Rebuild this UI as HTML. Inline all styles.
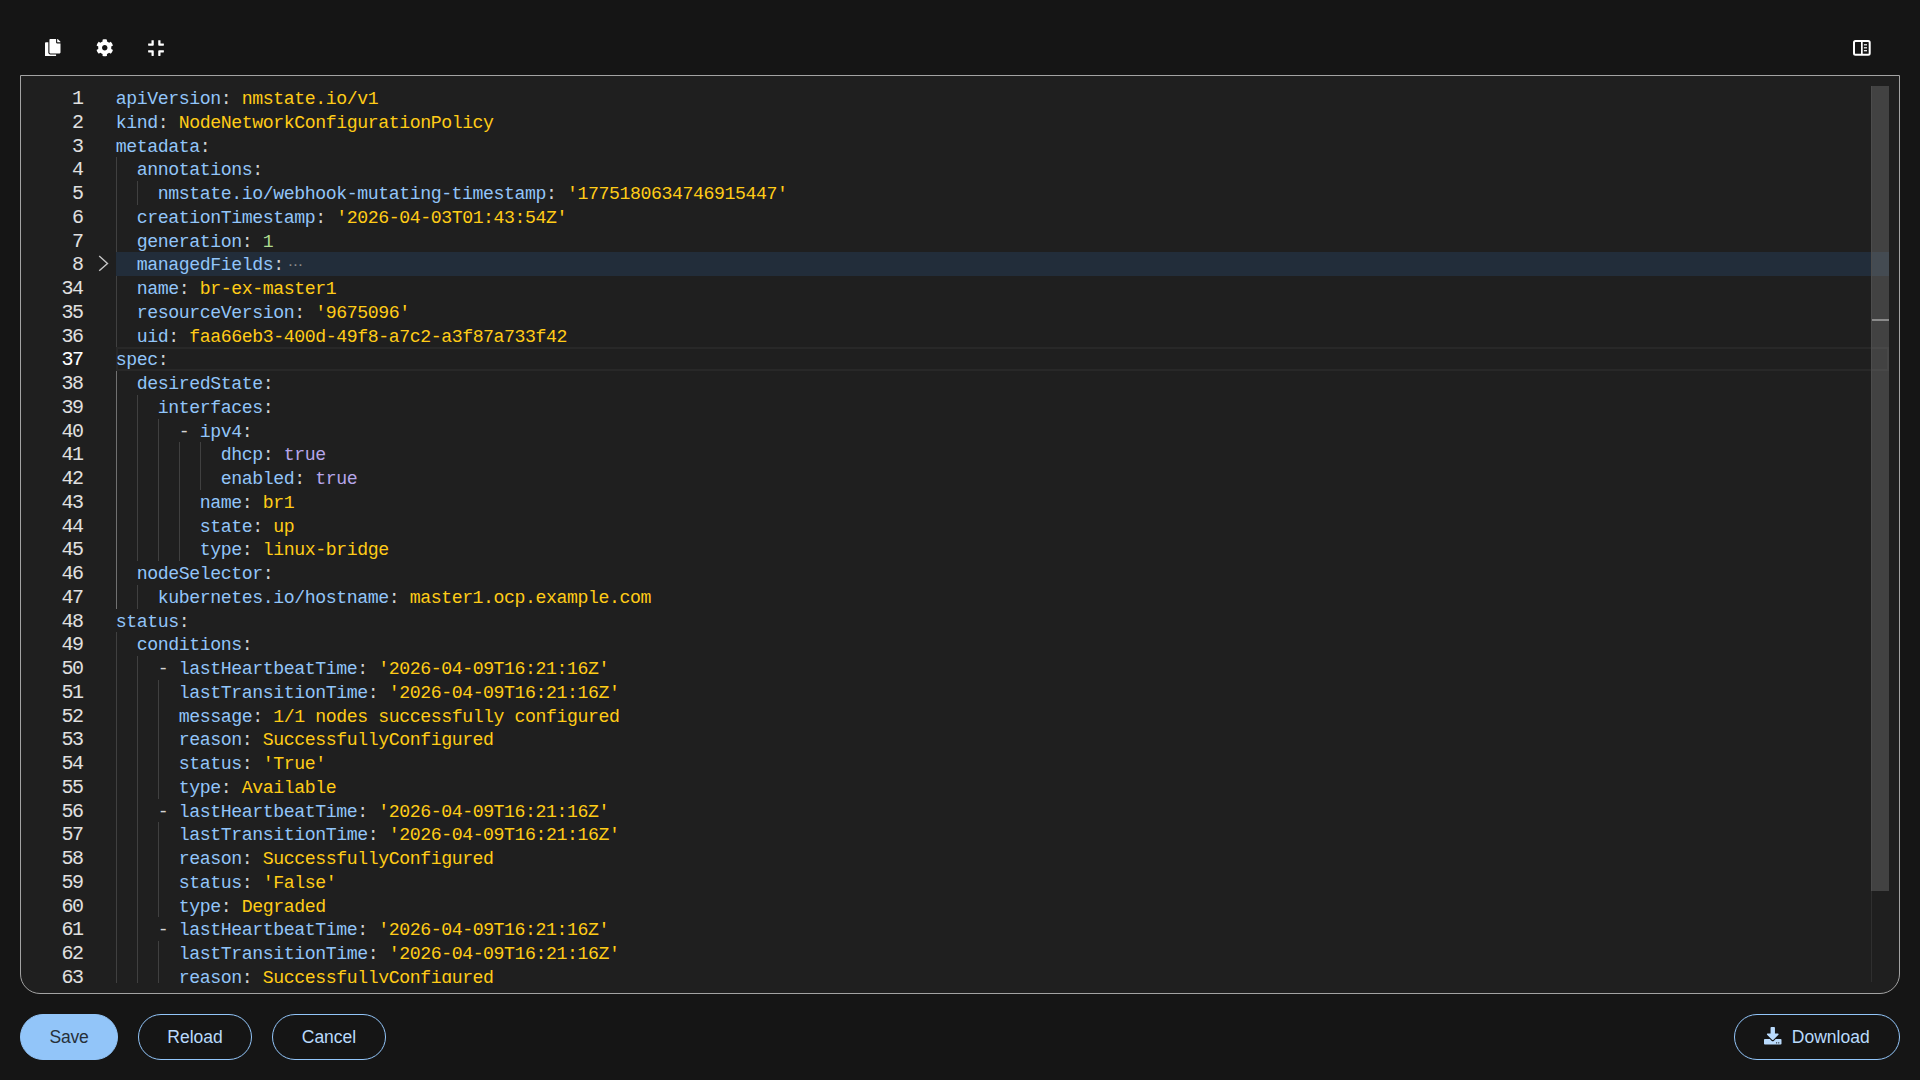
<!DOCTYPE html>
<html lang="en"><head><meta charset="utf-8"><title>YAML editor</title>
<style>
html,body{margin:0;padding:0;}
body{width:1920px;height:1080px;overflow:hidden;background:#151515;position:relative;font-family:"Liberation Sans",sans-serif;}
.ico{position:absolute;fill:#fff;}
#ed{position:absolute;left:20px;top:75px;width:1878px;height:917px;border:1px solid #a3a3a3;border-radius:0 0 20px 20px;background:#1f1f1f;}
#mo{position:absolute;left:9px;top:10px;width:1860px;height:897px;overflow:hidden;font-family:"Liberation Mono","DejaVu Sans Mono",monospace;font-size:18.2px;letter-spacing:-0.42px;line-height:23.75px;}
.ln{position:absolute;left:0;width:52.4px;margin-top:1px;font-size:20px;letter-spacing:-1.5px;text-align:right;height:23.75px;color:#e0e0e0;white-space:pre;}
.ln.act{color:#fff;}
.row{position:absolute;left:85.8px;margin-top:2px;height:23.75px;white-space:pre;color:#d4d4d4;}
.k{color:#92c5f9;} .s{color:#ffcc17;} .n{color:#afdc8f;} .b{color:#b6a6e9;} .d{color:#d4d4d4;}
.fold{color:#8c8c8c;font-family:"DejaVu Sans",sans-serif;font-size:15px;letter-spacing:0;margin-left:3.9px;line-height:10px;position:relative;top:-0.4px;}
.g{position:absolute;width:1px;background:#404040;}
.g.ga{background:#707070;}
#foldbg{position:absolute;left:86px;top:166.25px;width:1773px;height:23.75px;background:#222d3a;}
#curline{position:absolute;left:86px;top:261.25px;width:1769px;height:19.75px;border:2px solid #282828;}
#sb{position:absolute;left:1841px;top:0;width:18px;height:805px;background:rgba(121,121,121,0.4);}
#sbl{position:absolute;left:1841px;top:0;width:1px;height:896px;background:#2f2f2f;}
#ovr{position:absolute;left:1842px;top:233px;width:17px;height:2px;background:#8a8a8a;}
.btn{position:absolute;top:1014px;height:44px;border:1px solid #92c5f9;border-radius:23px;color:#b9dafc;font-size:17.5px;line-height:44px;text-align:center;white-space:nowrap;}
.btn.pri{background:#92c5f9;color:#27303a;letter-spacing:-0.25px;}
</style></head><body>
<svg class="ico" style="left:45px;top:38.5px" width="15.5" height="17.75" viewBox="0 0 448 512"><path d="M320 448v40c0 13.255-10.745 24-24 24H24c-13.255 0-24-10.745-24-24V120c0-13.255 10.745-24 24-24h72v296c0 30.879 25.121 56 56 56h168zm0-344V0H152c-13.255 0-24 10.745-24 24v368c0 13.255 10.745 24 24 24h272c13.255 0 24-10.745 24-24V128H344c-13.200 0-24-10.800-24-24zm120.971-31.029L375.029 7.029A24 24 0 0 0 358.059 0H352v96h96v-6.059a24 24 0 0 0-7.029-16.970z"/></svg>
<svg class="ico" style="left:96px;top:39px" width="17.5" height="17.5" viewBox="0 0 512 512"><path d="M487.4 315.7l-42.600-24.600c4.300-23.200 4.300-47 0-70.200l42.600-24.600c4.900-2.800 7.100-8.600 5.500-14-11.100-35.600-30-67.800-54.700-94.600-3.800-4.100-10-5.100-14.800-2.300L380.800 110c-17.900-15.400-38.500-27.300-60.800-35.100V25.800c0-5.600-3.900-10.500-9.400-11.700-36.700-8.200-74.300-7.800-109.200 0-5.500 1.200-9.400 6.100-9.400 11.700V75c-22.200 7.900-42.800 19.800-60.800 35.100L88.700 85.500c-4.900-2.800-11-1.900-14.800 2.300-24.700 26.700-43.600 58.900-54.700 94.600-1.700 5.400.6 11.200 5.500 14L67.300 221c-4.300 23.200-4.300 47 0 70.200l-42.600 24.600c-4.900 2.800-7.100 8.600-5.500 14 11.100 35.600 30 67.800 54.700 94.600 3.800 4.100 10 5.100 14.800 2.300l42.600-24.600c17.900 15.400 38.500 27.300 60.800 35.100v49.200c0 5.600 3.900 10.500 9.400 11.700 36.700 8.200 74.300 7.800 109.200 0 5.500-1.200 9.400-6.100 9.400-11.700v-49.200c22.200-7.900 42.800-19.800 60.800-35.100l42.600 24.600c4.900 2.800 11 1.900 14.800-2.300 24.700-26.700 43.600-58.900 54.700-94.600 1.500-5.500-.7-11.300-5.600-14.100zM256 336c-44.100 0-80-35.900-80-80s35.900-80 80-80 80 35.900 80 80-35.900 80-80 80z"/></svg>
<svg class="ico" style="left:148px;top:39px" width="16" height="18" viewBox="0 0 448 512"><path d="M436 192H312c-13.300 0-24-10.700-24-24V44c0-6.600 5.400-12 12-12h40c6.600 0 12 5.400 12 12v84h84c6.600 0 12 5.400 12 12v40c0 6.600-5.400 12-12 12zm-276-24V44c0-6.600-5.400-12-12-12h-40c-6.600 0-12 5.400-12 12v84H12c-6.600 0-12 5.400-12 12v40c0 6.600 5.400 12 12 12h124c13.300 0 24-10.700 24-24zm0 300V344c0-13.300-10.700-24-24-24H12c-6.600 0-12 5.400-12 12v40c0 6.600 5.400 12 12 12h84v84c0 6.600 5.400 12 12 12h40c6.600 0 12-5.400 12-12zm192 0v-84h84c6.600 0 12-5.400 12-12v-40c0-6.600-5.400-12-12-12H312c-13.300 0-24 10.700-24 24v124c0 6.600 5.400 12 12 12h40c6.600 0 12-5.400 12-12z"/></svg>
<svg class="ico" style="left:1852px;top:39px;fill:none" width="20" height="18" viewBox="0 0 20 18"><rect x="2" y="2" width="15.7" height="13.85" rx="1.5" stroke="#fff" stroke-width="2"/><rect x="9" y="2" width="1.7" height="14" fill="#fff"/><rect x="11.9" y="5.2" width="3.1" height="1.2" fill="#fff"/><rect x="11.9" y="8.2" width="3.1" height="1.2" fill="#fff"/><rect x="11.9" y="11.1" width="3.1" height="1.2" fill="#fff"/></svg>
<div id="ed"><div id="mo">
<i class="g" style="left:86.0px;top:71.25px;height:190.00px"></i>
<i class="g" style="left:107.0px;top:95.00px;height:23.75px"></i>
<i class="g ga" style="left:86.0px;top:285.00px;height:237.50px"></i>
<i class="g" style="left:107.0px;top:308.75px;height:166.25px"></i>
<i class="g" style="left:107.0px;top:498.75px;height:23.75px"></i>
<i class="g" style="left:128.0px;top:332.50px;height:142.50px"></i>
<i class="g" style="left:149.0px;top:356.25px;height:118.75px"></i>
<i class="g" style="left:170.0px;top:356.25px;height:47.50px"></i>
<i class="g" style="left:86.0px;top:546.25px;height:356.25px"></i>
<i class="g" style="left:107.0px;top:570.00px;height:332.50px"></i>
<i class="g" style="left:128.0px;top:593.75px;height:118.75px"></i>
<i class="g" style="left:128.0px;top:736.25px;height:95.00px"></i>
<i class="g" style="left:128.0px;top:855.00px;height:47.50px"></i>
<div id="foldbg"></div><div id="curline"></div>
<div class="ln" style="top:0.00px">1</div>
<div class="row" style="top:0.00px"><span class="k">apiVersion</span><span class="d">:</span> <span class="s">nmstate.io/v1</span></div>
<div class="ln" style="top:23.75px">2</div>
<div class="row" style="top:23.75px"><span class="k">kind</span><span class="d">:</span> <span class="s">NodeNetworkConfigurationPolicy</span></div>
<div class="ln" style="top:47.50px">3</div>
<div class="row" style="top:47.50px"><span class="k">metadata</span><span class="d">:</span></div>
<div class="ln" style="top:71.25px">4</div>
<div class="row" style="top:71.25px">  <span class="k">annotations</span><span class="d">:</span></div>
<div class="ln" style="top:95.00px">5</div>
<div class="row" style="top:95.00px">    <span class="k">nmstate.io/webhook-mutating-timestamp</span><span class="d">:</span> <span class="s">&#x27;1775180634746915447&#x27;</span></div>
<div class="ln" style="top:118.75px">6</div>
<div class="row" style="top:118.75px">  <span class="k">creationTimestamp</span><span class="d">:</span> <span class="s">&#x27;2026-04-03T01:43:54Z&#x27;</span></div>
<div class="ln" style="top:142.50px">7</div>
<div class="row" style="top:142.50px">  <span class="k">generation</span><span class="d">:</span> <span class="n">1</span></div>
<div class="ln" style="top:166.25px">8</div>
<div class="row" style="top:166.25px">  <span class="k">managedFields</span><span class="d">:</span><span class="fold">⋯</span></div>
<div class="ln" style="top:190.00px">34</div>
<div class="row" style="top:190.00px">  <span class="k">name</span><span class="d">:</span> <span class="s">br-ex-master1</span></div>
<div class="ln" style="top:213.75px">35</div>
<div class="row" style="top:213.75px">  <span class="k">resourceVersion</span><span class="d">:</span> <span class="s">&#x27;9675096&#x27;</span></div>
<div class="ln" style="top:237.50px">36</div>
<div class="row" style="top:237.50px">  <span class="k">uid</span><span class="d">:</span> <span class="s">faa66eb3-400d-49f8-a7c2-a3f87a733f42</span></div>
<div class="ln act" style="top:261.25px">37</div>
<div class="row" style="top:261.25px"><span class="k">spec</span><span class="d">:</span></div>
<div class="ln" style="top:285.00px">38</div>
<div class="row" style="top:285.00px">  <span class="k">desiredState</span><span class="d">:</span></div>
<div class="ln" style="top:308.75px">39</div>
<div class="row" style="top:308.75px">    <span class="k">interfaces</span><span class="d">:</span></div>
<div class="ln" style="top:332.50px">40</div>
<div class="row" style="top:332.50px">      <span class="d">- </span><span class="k">ipv4</span><span class="d">:</span></div>
<div class="ln" style="top:356.25px">41</div>
<div class="row" style="top:356.25px">          <span class="k">dhcp</span><span class="d">:</span> <span class="b">true</span></div>
<div class="ln" style="top:380.00px">42</div>
<div class="row" style="top:380.00px">          <span class="k">enabled</span><span class="d">:</span> <span class="b">true</span></div>
<div class="ln" style="top:403.75px">43</div>
<div class="row" style="top:403.75px">        <span class="k">name</span><span class="d">:</span> <span class="s">br1</span></div>
<div class="ln" style="top:427.50px">44</div>
<div class="row" style="top:427.50px">        <span class="k">state</span><span class="d">:</span> <span class="s">up</span></div>
<div class="ln" style="top:451.25px">45</div>
<div class="row" style="top:451.25px">        <span class="k">type</span><span class="d">:</span> <span class="s">linux-bridge</span></div>
<div class="ln" style="top:475.00px">46</div>
<div class="row" style="top:475.00px">  <span class="k">nodeSelector</span><span class="d">:</span></div>
<div class="ln" style="top:498.75px">47</div>
<div class="row" style="top:498.75px">    <span class="k">kubernetes.io/hostname</span><span class="d">:</span> <span class="s">master1.ocp.example.com</span></div>
<div class="ln" style="top:522.50px">48</div>
<div class="row" style="top:522.50px"><span class="k">status</span><span class="d">:</span></div>
<div class="ln" style="top:546.25px">49</div>
<div class="row" style="top:546.25px">  <span class="k">conditions</span><span class="d">:</span></div>
<div class="ln" style="top:570.00px">50</div>
<div class="row" style="top:570.00px">    <span class="d">- </span><span class="k">lastHeartbeatTime</span><span class="d">:</span> <span class="s">&#x27;2026-04-09T16:21:16Z&#x27;</span></div>
<div class="ln" style="top:593.75px">51</div>
<div class="row" style="top:593.75px">      <span class="k">lastTransitionTime</span><span class="d">:</span> <span class="s">&#x27;2026-04-09T16:21:16Z&#x27;</span></div>
<div class="ln" style="top:617.50px">52</div>
<div class="row" style="top:617.50px">      <span class="k">message</span><span class="d">:</span> <span class="s">1/1 nodes successfully configured</span></div>
<div class="ln" style="top:641.25px">53</div>
<div class="row" style="top:641.25px">      <span class="k">reason</span><span class="d">:</span> <span class="s">SuccessfullyConfigured</span></div>
<div class="ln" style="top:665.00px">54</div>
<div class="row" style="top:665.00px">      <span class="k">status</span><span class="d">:</span> <span class="s">&#x27;True&#x27;</span></div>
<div class="ln" style="top:688.75px">55</div>
<div class="row" style="top:688.75px">      <span class="k">type</span><span class="d">:</span> <span class="s">Available</span></div>
<div class="ln" style="top:712.50px">56</div>
<div class="row" style="top:712.50px">    <span class="d">- </span><span class="k">lastHeartbeatTime</span><span class="d">:</span> <span class="s">&#x27;2026-04-09T16:21:16Z&#x27;</span></div>
<div class="ln" style="top:736.25px">57</div>
<div class="row" style="top:736.25px">      <span class="k">lastTransitionTime</span><span class="d">:</span> <span class="s">&#x27;2026-04-09T16:21:16Z&#x27;</span></div>
<div class="ln" style="top:760.00px">58</div>
<div class="row" style="top:760.00px">      <span class="k">reason</span><span class="d">:</span> <span class="s">SuccessfullyConfigured</span></div>
<div class="ln" style="top:783.75px">59</div>
<div class="row" style="top:783.75px">      <span class="k">status</span><span class="d">:</span> <span class="s">&#x27;False&#x27;</span></div>
<div class="ln" style="top:807.50px">60</div>
<div class="row" style="top:807.50px">      <span class="k">type</span><span class="d">:</span> <span class="s">Degraded</span></div>
<div class="ln" style="top:831.25px">61</div>
<div class="row" style="top:831.25px">    <span class="d">- </span><span class="k">lastHeartbeatTime</span><span class="d">:</span> <span class="s">&#x27;2026-04-09T16:21:16Z&#x27;</span></div>
<div class="ln" style="top:855.00px">62</div>
<div class="row" style="top:855.00px">      <span class="k">lastTransitionTime</span><span class="d">:</span> <span class="s">&#x27;2026-04-09T16:21:16Z&#x27;</span></div>
<div class="ln" style="top:878.75px">63</div>
<div class="row" style="top:878.75px">      <span class="k">reason</span><span class="d">:</span> <span class="s">SuccessfullyConfigured</span></div>
<svg style="position:absolute;left:66px;top:168px" width="14" height="20" viewBox="0 0 14 20"><path d="M3.2 2 L11.5 9.4 L3.2 16.8" fill="none" stroke="#c5c5c5" stroke-width="1.4"/></svg>
<div id="sbl"></div>
<div id="sb"></div>
<div id="ovr"></div>
</div></div>
<div class="btn pri" style="left:20px;width:96px">Save</div>
<div class="btn" style="left:138px;width:112px">Reload</div>
<div class="btn" style="left:272px;width:112px">Cancel</div>
<div class="btn" style="left:1734px;width:164px"><svg style="fill:#b9dafc;vertical-align:-1.5px;margin-right:10px" width="17.5" height="17.5" viewBox="0 0 512 512"><path d="M216 0h80c13.300 0 24 10.700 24 24v168h87.700c17.800 0 26.700 21.500 14.100 34.100L269.700 378.300c-7.500 7.500-19.800 7.500-27.300 0L90.100 226.100c-12.600-12.600-3.700-34.100 14.100-34.100H192V24c0-13.300 10.700-24 24-24zm296 376v112c0 13.300-10.700 24-24 24H24c-13.300 0-24-10.700-24-24V376c0-13.300 10.700-24 24-24h146.700l49 49c20.100 20.100 52.500 20.100 72.600 0l49-49H488c13.300 0 24 10.700 24 24zm-124 88c0-11-9-20-20-20s-20 9-20 20 9 20 20 20 20-9 20-20zm64 0c0-11-9-20-20-20s-20 9-20 20 9 20 20 20 20-9 20-20z"/></svg>Download</div>
</body></html>
